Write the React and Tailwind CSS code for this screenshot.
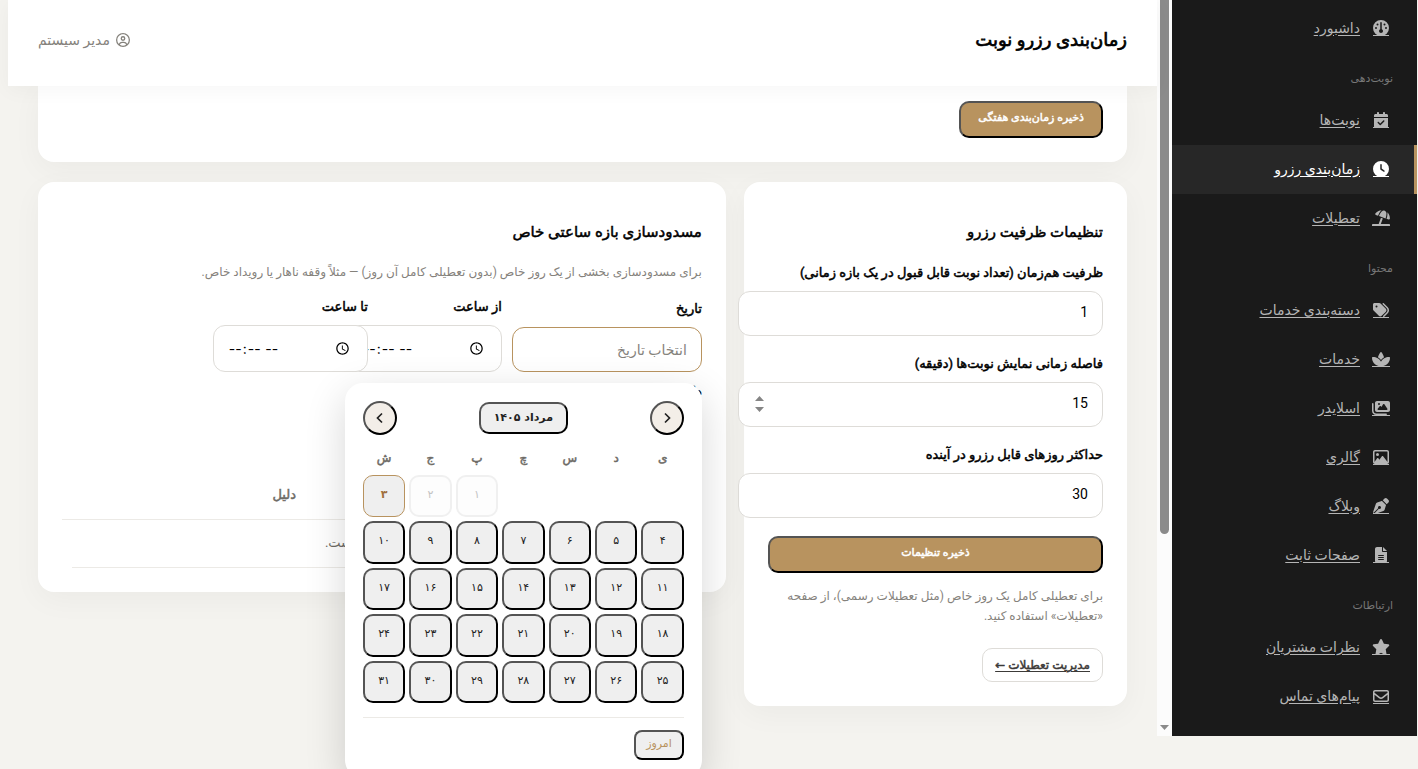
import React from "react";
import {
  FaGauge,
  FaCalendarCheck,
  FaClock,
  FaUmbrellaBeach,
  FaTags,
  FaSpa,
  FaImages,
  FaRegImage,
  FaPenNib,
  FaFileLines,
  FaStar,
  FaRegEnvelope,
  FaRegCircleUser,
} from "react-icons/fa6";

const NAV = [
  { items: [{ label: "داشبورد", icon: FaGauge }] },
  {
    title: "نوبت‌دهی",
    items: [
      { label: "نوبت‌ها", icon: FaCalendarCheck },
      { label: "زمان‌بندی رزرو", icon: FaClock, active: true },
      { label: "تعطیلات", icon: FaUmbrellaBeach, wide: true },
    ],
  },
  {
    title: "محتوا",
    items: [
      { label: "دسته‌بندی خدمات", icon: FaTags },
      { label: "خدمات", icon: FaSpa, wide: true },
      { label: "اسلایدر", icon: FaImages, wide: true },
      { label: "گالری", icon: FaRegImage },
      { label: "وبلاگ", icon: FaPenNib },
      { label: "صفحات ثابت", icon: FaFileLines },
    ],
  },
  {
    title: "ارتباطات",
    items: [
      { label: "نظرات مشتریان", icon: FaStar, wide: true },
      { label: "پیام‌های تماس", icon: FaRegEnvelope },
    ],
  },
];

const WEEKDAYS = ["ی", "د", "س", "چ", "پ", "ج", "ش"];
const TODAY = 3;
const toFa = (n) => String(n).replace(/\d/g, (d) => "۰۱۲۳۴۵۶۷۸۹"[d]);

const card = "bg-white shadow-[0_8px_30px_rgba(0,0,0,0.04)]";
const semibold = "font-normal [-webkit-text-stroke:0.5px_currentColor]";
const fieldBase = "block rounded-xl border bg-white px-[14px] text-sm text-black outline-none";
const field = fieldBase + " border-[#dedcd8]";
const labelText = "block text-[13px] leading-6 text-black " + semibold;
const heading = "mt-[14px] mb-[17px] text-[15px] leading-6 " + semibold;
const rawButton = "border-2 border-black [border-style:outset]";
const goldButton =
  rawButton + " h-[37px] rounded-[10px] bg-[#b8935f] px-[17px] pb-[2px] text-[11px] text-white " + semibold;

function Sidebar() {
  return (
    <aside className="flex w-[260px] shrink-0 self-start bg-[#1a1a1a]">
      <nav className="min-w-0 flex-1 pt-1 pb-[15px]">
        {NAV.map((group, i) => (
          <div key={i}>
            {group.title && (
              <h2 className="px-6 pt-4 pb-2 text-[11px] leading-[19px] text-[#777]">{group.title}</h2>
            )}
            {group.items.map(({ label, icon: Icon, active, wide }) => (
              <a
                key={label}
                href="#"
                className={
                  "flex h-[49px] items-center gap-3 border-r-[3px] pr-6 pb-[2px] text-sm underline underline-offset-2 " +
                  (active
                    ? "border-[#b8935f] bg-[#272727] text-white"
                    : "border-transparent text-[#b5b5b5]")
                }
              >
                <span className="flex w-[18px] justify-center">
                  <span className="border-b border-current">
                    <Icon className={"-mb-px h-4 max-w-none " + (wide ? "w-[18px]" : "w-4")} />
                  </span>
                </span>
                {label}
              </a>
            ))}
          </div>
        ))}
      </nav>
      <div className="flex w-[15px] flex-col items-center justify-between bg-[#fcfcfc]">
        <div className="h-[534px] w-[9px] rounded-b-full bg-[#8b8b8b]" />
        <svg className="mb-[6px] h-[5px] w-[9px]" viewBox="0 0 9 5">
          <path d="M0 0h9L4.500 5z" fill="#8b8b8b" />
        </svg>
      </div>
    </aside>
  );
}

function NumberField({ id, label, value, spinner }) {
  return (
    <div className="mb-4">
      <label htmlFor={id} className={labelText + " mb-[6px]"}>
        {label}
      </label>
      <div className="relative w-[calc(100%+30px)]">
        <input
          id={id}
          type="number"
          defaultValue={value}
          className={
            field +
            " h-[45px] w-full pb-1 text-right [appearance:textfield] [&::-webkit-inner-spin-button]:appearance-none"
          }
        />
        {spinner && (
          <svg className="absolute top-[14px] left-[17px] h-4 w-[9px]" viewBox="0 0 9 16">
            <path d="M0 5L4.500 0 9 5zM0 11h9L4.500 16z" fill="#858585" />
          </svg>
        )}
      </div>
    </div>
  );
}

function CapacityCard() {
  return (
    <section className={card + " rounded-2xl p-6"}>
      <h3 className={heading}>تنظیمات ظرفیت رزرو</h3>
      <NumberField id="capacity" label="ظرفیت هم‌زمان (تعداد نوبت قابل قبول در یک بازه زمانی)" value={1} />
      <NumberField id="interval" label="فاصله زمانی نمایش نوبت‌ها (دقیقه)" value={15} spinner />
      <NumberField id="days" label="حداکثر روزهای قابل رزرو در آینده" value={30} />
      <button type="button" className={goldButton + " mt-[18px] block w-full"}>
        ذخیره تنظیمات
      </button>
      <p className="mt-[13px] text-xs leading-5 text-[#85827c]">
        برای تعطیلی کامل یک روز خاص (مثل تعطیلات رسمی)، از صفحه «تعطیلات» استفاده کنید.
      </p>
      <a
        href="#"
        className={
          "mt-[22px] inline-block rounded-[10px] border border-[#dedcd8] px-3 py-[6px] align-top text-xs leading-5 text-[#3c3a38] underline underline-offset-2 " +
          semibold
        }
      >
        مدیریت تعطیلات ←
      </a>
    </section>
  );
}

function Chevron({ d }) {
  return (
    <svg viewBox="0 0 12 12" className="h-3 w-3" fill="none" stroke="#222" strokeWidth="1.700">
      <path d={d} />
    </svg>
  );
}

function Calendar() {
  const round =
    rawButton + " flex h-[34px] w-[34px] items-center justify-center rounded-full bg-[#f3eee8]";
  return (
    <div className="absolute top-full right-0 z-20 mt-[11px] w-[357px] rounded-[18px] bg-white p-[18px] font-['DejaVu_Sans',sans-serif] shadow-[0_12px_40px_rgba(0,0,0,0.16)]">
      <div className="flex items-center justify-between">
        <button type="button" aria-label="ماه قبل" className={round}>
          <Chevron d="M4 1.500L8.500 6 4 10.500" />
        </button>
        <button
          type="button"
          className={rawButton + " h-8 rounded-[10px] bg-[#efefef] px-[13px] text-[11px] font-bold text-[#222]"}
        >
          مرداد ۱۴۰۵
        </button>
        <button type="button" aria-label="ماه بعد" className={round}>
          <Chevron d="M8 1.500L3.500 6 8 10.500" />
        </button>
      </div>
      <div
        className={"mt-3 mb-[6px] grid grid-cols-7 gap-1 text-center text-xs leading-[22px] text-[#6e6b66] " + semibold}
      >
        {WEEKDAYS.map((d) => (
          <span key={d}>{d}</span>
        ))}
      </div>
      <div className="grid grid-cols-7 gap-1">
        {Array.from({ length: 31 }, (_, i) => i + 1).map((n) => (
          <button
            key={n}
            type="button"
            disabled={n < TODAY}
            className={
              "aspect-square rounded-[10px] pb-[2px] text-[11px] " +
              (n === 1 ? "col-start-5 " : "") +
              (n === TODAY
                ? "border border-[#b8935f] bg-[#efefef] font-bold text-[#a0703c]"
                : n < TODAY
                  ? "border-2 border-[#f0f0f0] bg-[#fdfdfd] text-[#c4c4c4]"
                  : rawButton + " bg-[#efefef] text-[#222]")
            }
          >
            {toFa(n)}
          </button>
        ))}
      </div>
      <div className="mt-[14px] border-t border-[#eceae6] pt-3">
        <button
          type="button"
          className={rawButton + " block h-[30px] rounded-lg bg-[#efefef] px-[10px] pb-[2px] text-[11px] text-[#b8935f]"}
        >
          امروز
        </button>
      </div>
    </div>
  );
}

function TimeField({ id, label }) {
  return (
    <div className="w-[124px] shrink-0">
      <label htmlFor={id} className={labelText + " mb-[6px]"}>
        {label}
      </label>
      <div className="w-[155px]">
        <input
          id={id}
          type="time"
          dir="ltr"
          className={field + " relative h-[47px] w-full font-['Inter',sans-serif]"}
        />
      </div>
    </div>
  );
}

function BlockCard() {
  return (
    <section className={card + " rounded-2xl p-6"}>
      <h3 className={heading}>مسدودسازی بازه ساعتی خاص</h3>
      <p className="mb-3 text-xs leading-[22px] text-[#85827c]">
        برای مسدودسازی بخشی از یک روز خاص (بدون تعطیلی کامل آن روز) — مثلاً وقفه ناهار یا رویداد خاص.
      </p>
      <form>
        <div className="flex items-end gap-[10px]">
          <div className="relative w-[190px] shrink-0">
            <label htmlFor="date" className={labelText + " mb-[6px]"}>
              تاریخ
            </label>
            <input
              id="date"
              type="text"
              placeholder="انتخاب تاریخ"
              className={fieldBase + " h-[45px] w-full border-[#b8935f] placeholder:text-[#85827c]"}
            />
            <Calendar />
          </div>
          <TimeField id="from" label="از ساعت" />
          <TimeField id="to" label="تا ساعت" />
        </div>
        <div className="mt-2 flex items-end gap-[10px]">
          <div className="w-[190px]">
            <label htmlFor="reason" className={labelText + " mb-[6px]"}>
              دلیل
            </label>
            <input id="reason" type="text" className={field + " h-[45px] w-full"} />
          </div>
          <button type="button" className={goldButton}>
            افزودن
          </button>
        </div>
      </form>
      <table className="mt-4 w-full table-fixed text-[13px] text-[#6e6b66]">
        <colgroup>
          <col />
          <col className="w-[234px]" />
          <col className="w-[10px]" />
        </colgroup>
        <thead>
          <tr className="h-12 border-b border-[#eceae6] text-right">
            <th className="px-[10px] font-normal">تاریخ</th>
            <th className={"px-[10px] " + semibold}>دلیل</th>
            <th />
          </tr>
        </thead>
        <tbody>
          <tr className="h-12">
            <td colSpan={2} className="border-b border-[#eceae6] text-center">
              بازه‌ای ثبت نشده است.
            </td>
          </tr>
        </tbody>
      </table>
    </section>
  );
}

export default function App() {
  return (
    <div
      dir="rtl"
      className="flex h-screen overflow-hidden bg-[#f4f3ef] pr-px pl-2 font-['Roboto','DejaVu_Sans',sans-serif] text-black"
    >
      <Sidebar />
      <main className="min-w-0 flex-1">
        <header className="relative z-10 flex h-[86px] items-center justify-between bg-white px-[30px] pb-[6px] shadow-[0_4px_20px_rgba(0,0,0,0.04)]">
          <h1 className="text-lg font-normal [-webkit-text-stroke:0.7px_currentColor]">زمان‌بندی رزرو نوبت</h1>
          <div className="flex items-center gap-[6px] text-sm text-[#85827c]">
            <FaRegCircleUser className="h-[14px] w-[14px]" />
            <span>مدیر سیستم</span>
          </div>
        </header>
        <div className="px-[30px]">
          <section className={card + " rounded-b-2xl px-6 pt-[15px] pb-6"}>
            <button type="button" className={goldButton + " block"}>
              ذخیره زمان‌بندی هفتگی
            </button>
          </section>
          <div className="mt-5 grid grid-cols-[minmax(0,1fr)_minmax(0,1.795fr)] items-start gap-[18px]">
            <CapacityCard />
            <BlockCard />
          </div>
        </div>
      </main>
    </div>
  );
}
